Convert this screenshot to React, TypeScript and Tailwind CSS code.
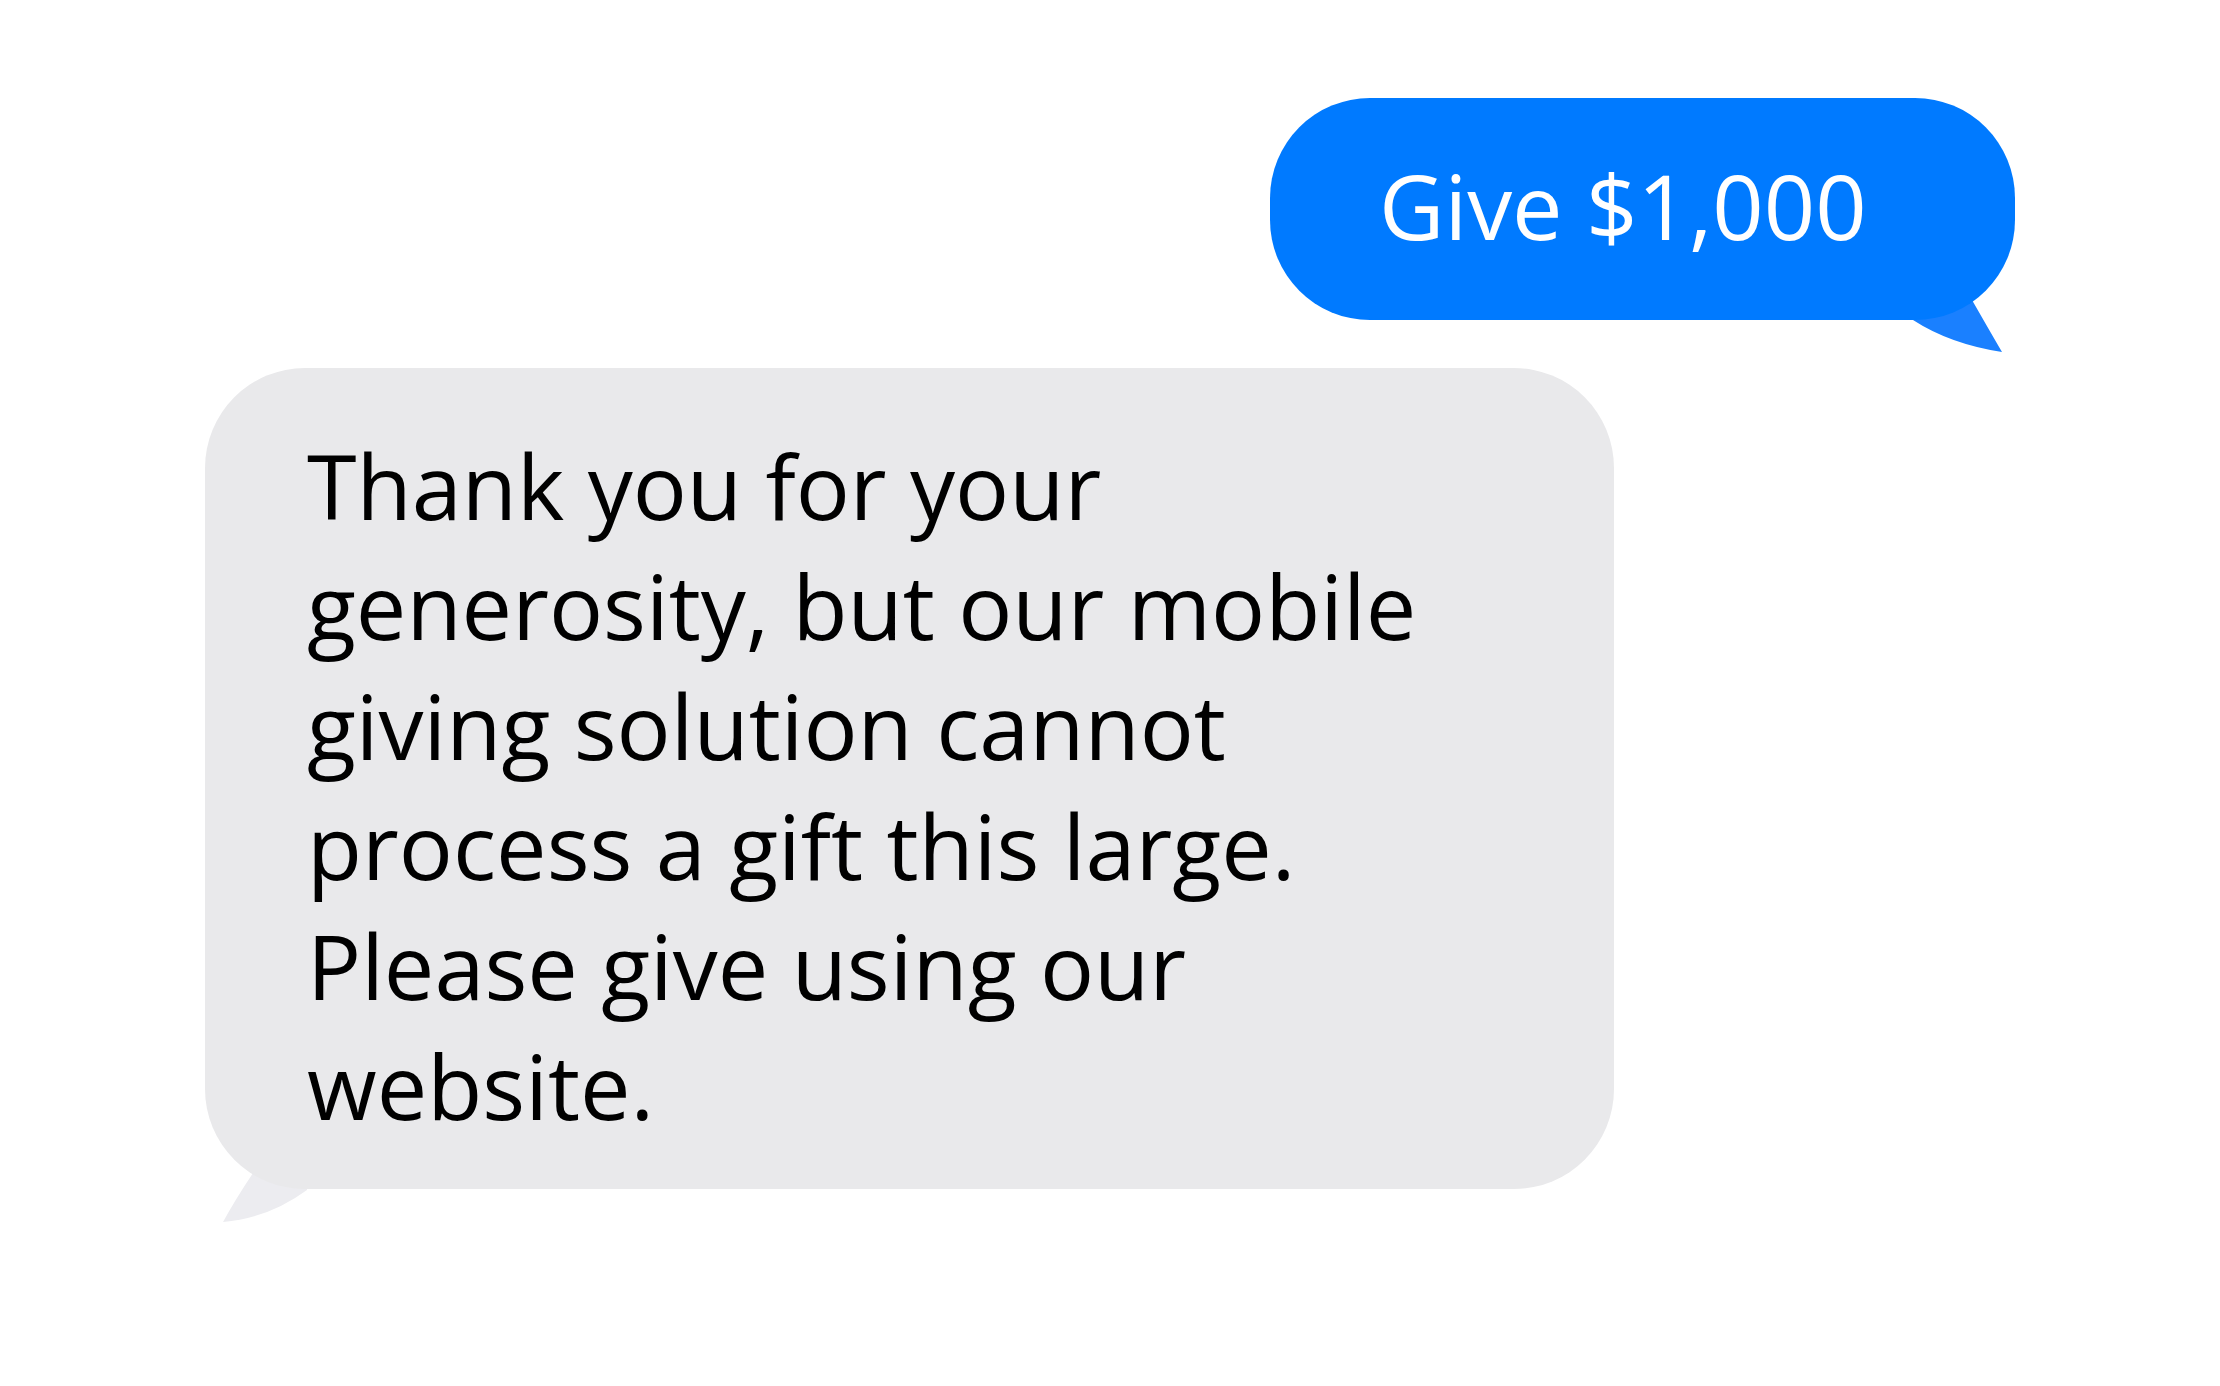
const lines = [
  'Thank you for your',
  'generosity, but our mobile',
  'giving solution cannot',
  'process a gift this large.',
  'Please give using our',
  'website.',
]

export default function App() {
  return (
    <div className="w-[2220px] h-[1386px] bg-white px-[205px] pt-[98px] flex flex-col font-['Open_Sans',sans-serif]">
      {/* Sent bubble */}
      <div className="flex justify-end">
        <div className="relative">
          <svg className="absolute left-[640px] top-[200px]" width="100" height="60" viewBox="0 0 100 60">
            <path d="M50 0 L62 2 Q78 30 92 54 Q40 46 3 22 L3 0 Z" fill="#1a80ff" />
          </svg>
          <div className="relative h-[222px] w-[745px] rounded-[100px] bg-[#007aff] pl-[109px] pb-[8px] flex items-center">
            <span className="text-white text-[90px] leading-none whitespace-nowrap">Give $1,000</span>
          </div>
        </div>
      </div>

      {/* Received bubble */}
      <div className="mt-[48px] self-start relative">
        <svg className="absolute left-[14px] top-[790px]" width="100" height="70" viewBox="0 0 100 70">
          <path d="M40 0 L34 15 Q16 42 4 64 Q50 60 88 32 L88 0 Z" fill="#ececf0" />
        </svg>
        <div className="relative h-[821px] w-[1409px] rounded-[100px] bg-[#e9e9eb] pl-[102px] pt-[57px]">
          <div className="text-black text-[90px] leading-[120px]">
            {lines.map((l) => (
              <div key={l} className="whitespace-nowrap">{l}</div>
            ))}
          </div>
        </div>
      </div>
    </div>
  )
}
